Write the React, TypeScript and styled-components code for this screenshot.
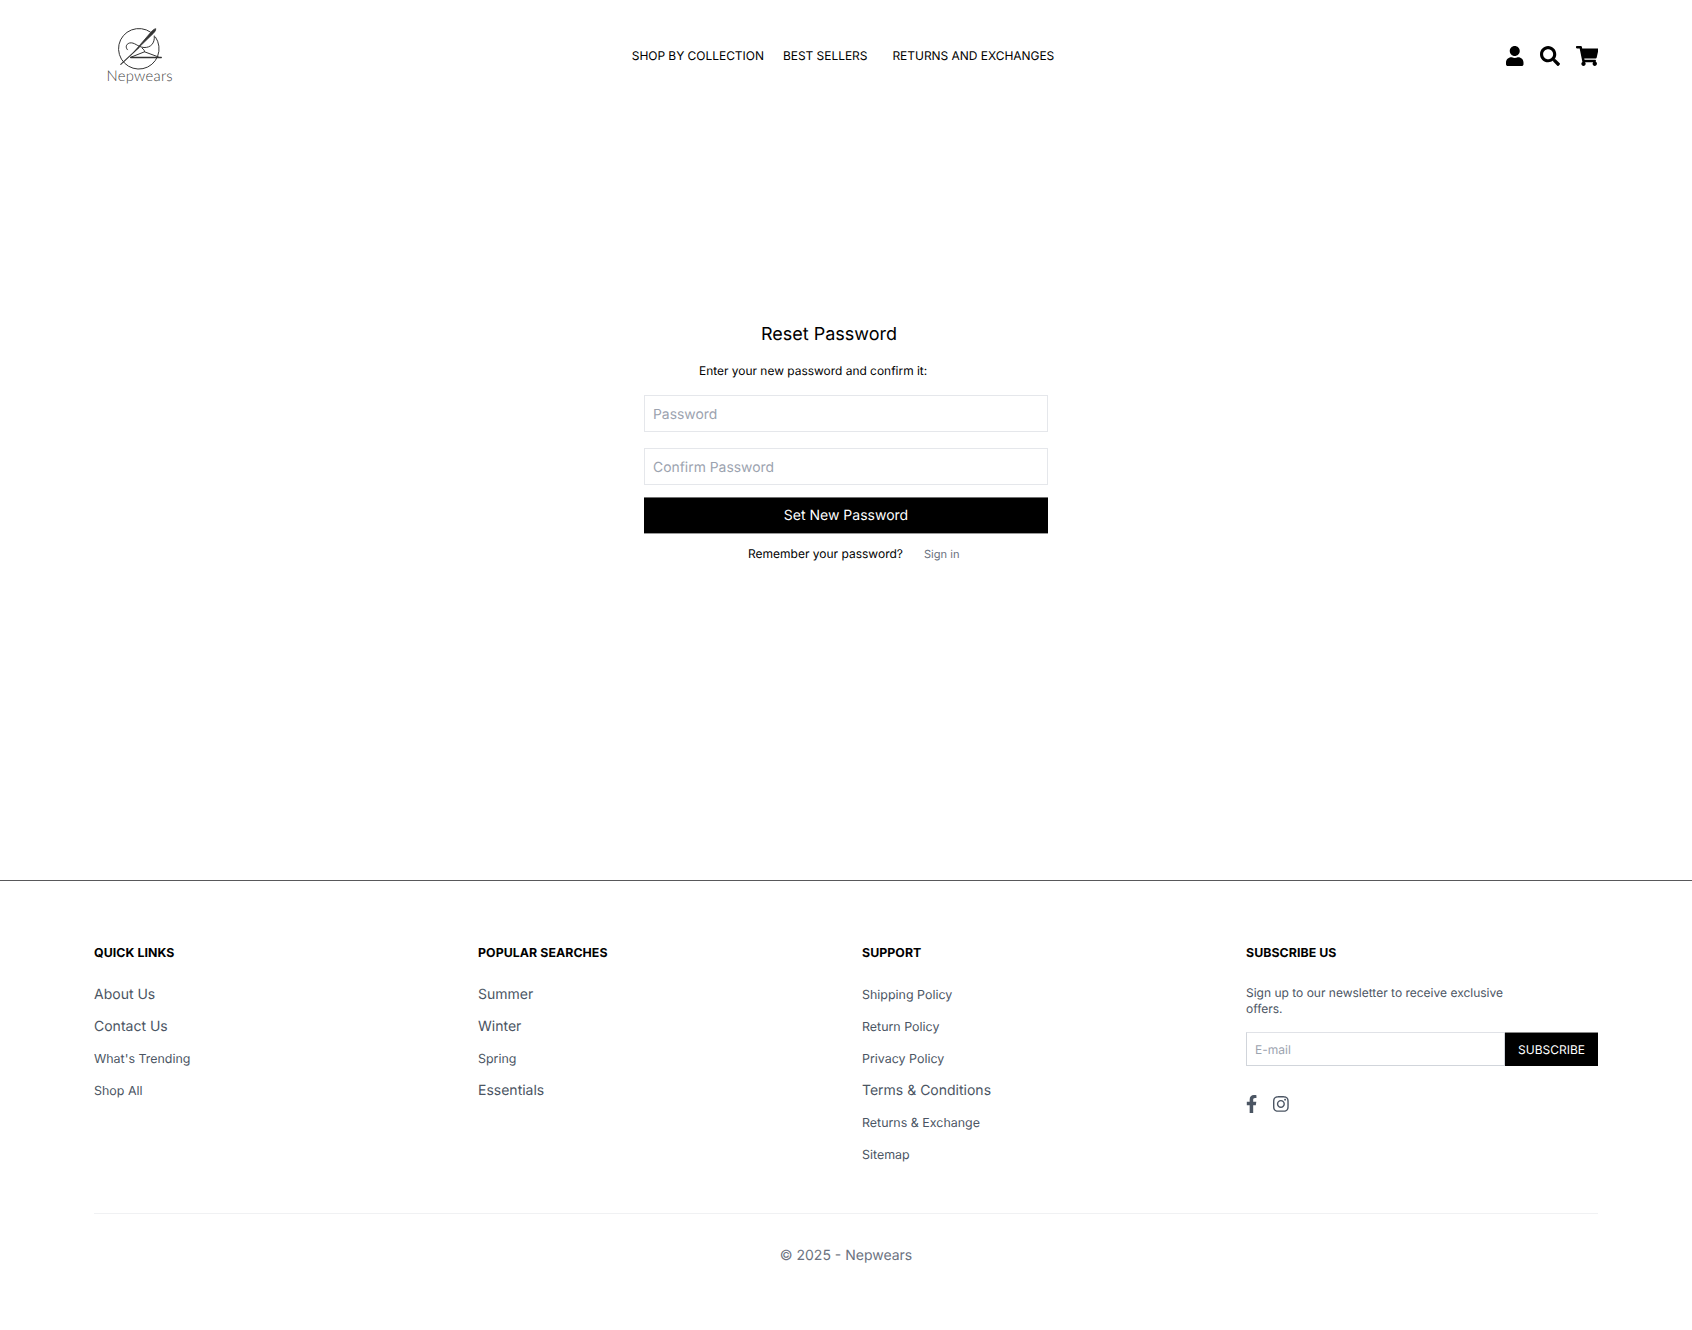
import React from "react";
import styled, { createGlobalStyle } from "styled-components";
import { FaUser, FaSearch, FaShoppingCart, FaFacebookF, FaInstagram } from "react-icons/fa";

const GlobalStyle = createGlobalStyle`
  *, *::before, *::after { box-sizing: border-box; }
  body {
    margin: 0;
    background: #fff;
    color: #000;
    font-family: Inter, "Liberation Sans", sans-serif;
    font-size: 14px;
    text-rendering: geometricPrecision;
  }
  a { color: inherit; text-decoration: none; }
  input, button { font-family: inherit; border-radius: 0; margin: 0; text-rendering: inherit; }
`;

const Page = styled.div`
  min-height: 1330px;
  display: flex;
  flex-direction: column;
`;

const Header = styled.header`
  display: flex;
  align-items: center;
  justify-content: space-between;
  height: 112px;
  padding: 0 94px;
`;

const Brand = styled.div`
  flex: 1;
`;

const Actions = styled.div`
  flex: 1;
  display: flex;
  align-items: center;
  justify-content: flex-end;
  gap: 16px;
  svg { flex: none; height: 20px; }
`;

const UserIcon = styled(FaUser)`
  width: 17.5px;
`;

const SearchIcon = styled(FaSearch)`
  width: 20px;
`;

const CartIcon = styled(FaShoppingCart)`
  width: 22.5px;
`;

const Logo = styled.svg`
  display: block;
  width: 90px;
  height: 72px;
`;

const Nav = styled.nav`
  display: flex;
  padding-right: 6px;
  font-size: 12px;
  line-height: 18px;
  letter-spacing: -0.04px;
`;

const NavLink = styled.a<{ $gap?: number }>`
  margin-left: ${(p) => p.$gap ?? 0}px;
  white-space: nowrap;
`;

const Main = styled.main`
  height: 768px;
  padding-top: 210px;
  display: flex;
  justify-content: center;
`;

const Form = styled.form`
  width: 404px;
  display: flex;
  flex-direction: column;
`;

const Title = styled.h1`
  margin: 0 0 14px 117px;
  font-size: 18px;
  line-height: 26px;
  font-weight: 400;
`;

const Hint = styled.p`
  margin: 0 0 15px 55px;
  font-size: 11.95px;
  line-height: 18px;
`;

const Field = styled.input`
  height: 37px;
  width: 100%;
  margin-bottom: 16px;
  padding: 2px 8px 0;
  border: 1px solid #e5e7eb;
  outline: none;
  font-size: 13.9px;
  &::placeholder { color: #9ca3af; opacity: 1; }
  & + & { margin-bottom: 12px; }
`;

const Submit = styled.button`
  height: 37px;
  padding: 0;
  border: 0 solid;
  border-width: 1px 0;
  border-color: #707070 transparent #999;
  background: #000;
  background-clip: padding-box;
  color: #fff;
  font-size: 14px;
  line-height: 34px;
`;

const SignInRow = styled.div`
  display: flex;
  align-items: baseline;
  gap: 21px;
  margin: 10px 0 0 104px;
  font-size: 12px;
  line-height: 20px;
`;

const SignIn = styled.a`
  color: #6b7280;
  font-size: 11.1px;
`;

const Footer = styled.footer`
  border-top: 1px solid #58585a;
  padding: 63px 94px 0;
`;

const Columns = styled.div`
  display: grid;
  grid-template-columns: repeat(4, 352px);
  column-gap: 32px;
  height: 269px;
`;

const ColumnTitle = styled.h2`
  margin: 0 0 22px;
  font-size: 12.35px;
  letter-spacing: 0.06px;
  line-height: 18px;
  font-weight: 700;
`;

const LinkList = styled.ul`
  margin: 0;
  padding: 0;
  list-style: none;
  display: flex;
  flex-direction: column;
  gap: 10px;
  line-height: 22px;
  color: #4b5563;
  li { height: 22px; }
`;

const FooterLink = styled.a<{ $small?: boolean }>`
  font-size: ${(p) => (p.$small ? 12.45 : 14)}px;
`;

const Blurb = styled.p`
  width: 280px;
  margin: 0 0 15px;
  padding-top: 1px;
  color: #4b5563;
  font-size: 12px;
  line-height: 16px;
`;

const Subscribe = styled.div`
  display: flex;
  height: 34px;
`;

const Email = styled.input`
  flex: 1;
  min-width: 0;
  padding: 0 8px;
  border: 1px solid #d1d5db;
  border-top-color: #e0e2e7;
  outline: none;
  font-size: 12px;
  &::placeholder { color: #9ca3af; opacity: 1; }
`;

const SubscribeButton = styled.button`
  width: 93px;
  padding: 0;
  border: 0 solid #888;
  border-top-width: 1px;
  background: #000;
  background-clip: padding-box;
  color: #fff;
  font-size: 12px;
`;

const Social = styled.div`
  display: flex;
  gap: 16px;
  margin-top: 29px;
  color: #4b5563;
  svg { flex: none; height: 18px; }
`;

const FacebookIcon = styled(FaFacebookF)`
  width: 11.25px;
`;

const InstagramIcon = styled(FaInstagram)`
  width: 15.75px;
`;

const Copyright = styled.div`
  border-top: 1px solid #f0f1f3;
  padding-top: 31px;
  text-align: center;
  color: #6b7280;
  line-height: 22px;
`;

type Item = [label: string, small?: boolean];

const columns: { title: string; items: Item[] }[] = [
  { title: "QUICK LINKS", items: [["About Us"], ["Contact Us"], ["What's Trending", true], ["Shop All", true]] },
  { title: "POPULAR SEARCHES", items: [["Summer"], ["Winter"], ["Spring", true], ["Essentials"]] },
  {
    title: "SUPPORT",
    items: [
      ["Shipping Policy", true],
      ["Return Policy", true],
      ["Privacy Policy", true],
      ["Terms & Conditions"],
      ["Returns & Exchange", true],
      ["Sitemap", true],
    ],
  },
];

function BrandLogo() {
  return (
    <Logo viewBox="0 0 90 72" fill="none" stroke="#333" strokeLinecap="round" strokeLinejoin="round">
      <path d="M56.500 12.100A20.300 20.300 0 1 0 61.500 17.100" strokeWidth="1" />
      <path d="M26.800 44.300 45 27.300" strokeWidth="1.1" />
      <path d="M40 32 57.500 11.500Q60.500 8.500 61.800 8.700Q62.200 10.500 59.500 13.200Z" fill="#333" strokeWidth="0.8" />
      <path
        d="M33.500 29.800C31.500 27.800 31.500 24.300 35.500 23C40.500 21.800 43.500 27 50 27.500C56.500 27.800 61 23.500 60.300 16"
        strokeWidth="1"
      />
      <path d="M48 28C50 30 50.500 30 50.500 31.800L36.700 37.300M50.500 31.800 64.500 37" strokeWidth="1" />
      <path d="M36.700 37.500H67.300" strokeWidth="1.3" />
      <text
        x="12.600"
        y="60.700"
        fill="#444"
        stroke="none"
        fontFamily="Lato, sans-serif"
        fontWeight="300"
        fontSize="14.8"
        textLength="66"
      >
        Nepwears
      </text>
    </Logo>
  );
}

export default function App() {
  return (
    <Page>
      <GlobalStyle />
      <Header>
        <Brand>
          <BrandLogo />
        </Brand>
        <Nav>
          <NavLink href="#">SHOP BY COLLECTION</NavLink>
          <NavLink href="#" $gap={19}>BEST SELLERS</NavLink>
          <NavLink href="#" $gap={25}>RETURNS AND EXCHANGES</NavLink>
        </Nav>
        <Actions>
          <UserIcon />
          <SearchIcon />
          <CartIcon />
        </Actions>
      </Header>
      <Main>
        <Form>
          <Title>Reset Password</Title>
          <Hint>Enter your new password and confirm it:</Hint>
          <Field type="password" placeholder="Password" />
          <Field type="password" placeholder="Confirm Password" />
          <Submit type="button">Set New Password</Submit>
          <SignInRow>
            <span>Remember your password?</span>
            <SignIn href="#">Sign in</SignIn>
          </SignInRow>
        </Form>
      </Main>
      <Footer>
        <Columns>
          {columns.map((c) => (
            <section key={c.title}>
              <ColumnTitle>{c.title}</ColumnTitle>
              <LinkList>
                {c.items.map(([label, small]) => (
                  <li key={label}>
                    <FooterLink href="#" $small={small}>{label}</FooterLink>
                  </li>
                ))}
              </LinkList>
            </section>
          ))}
          <section>
            <ColumnTitle>SUBSCRIBE US</ColumnTitle>
            <Blurb>Sign up to our newsletter to receive exclusive offers.</Blurb>
            <Subscribe>
              <Email placeholder="E-mail" />
              <SubscribeButton type="button">SUBSCRIBE</SubscribeButton>
            </Subscribe>
            <Social>
              <FacebookIcon />
              <InstagramIcon />
            </Social>
          </section>
        </Columns>
        <Copyright>© 2025 - Nepwears</Copyright>
      </Footer>
    </Page>
  );
}
